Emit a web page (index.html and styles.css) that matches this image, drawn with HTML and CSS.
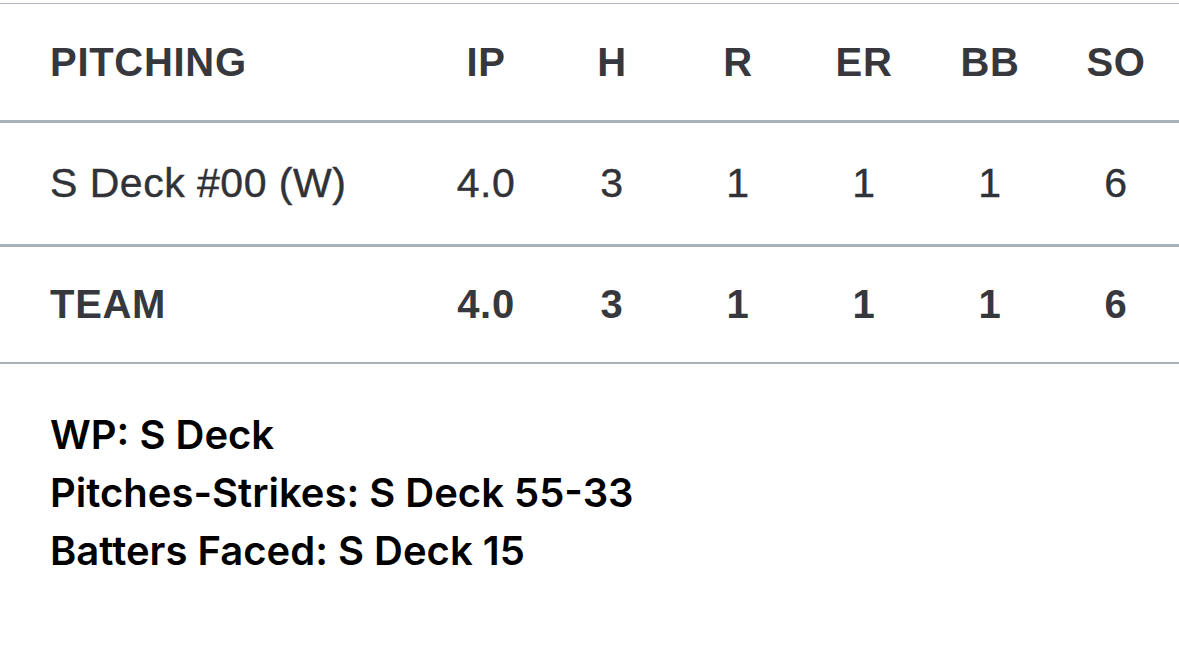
FILE: index.html
```html
<!DOCTYPE html>
<html lang="en">
<head>
    <meta charset="UTF-8">
    <meta name="viewport" content="width=device-width, initial-scale=1.0">
    <title>Pitching Box Score</title>
    <link rel="stylesheet" href="styles.css">
</head>
<body>
    <!-- Pitching Table -->
    <div class="statTable">
        <div class="statRow headRow">
            <div class="nameCell">PITCHING</div>
            <div>IP</div>
            <div>H</div>
            <div>R</div>
            <div>ER</div>
            <div>BB</div>
            <div>SO</div>
        </div>
        <div class="statRow playerRow">
            <div class="nameCell">S Deck #00 (W)</div>
            <div>4.0</div>
            <div>3</div>
            <div>1</div>
            <div>1</div>
            <div>1</div>
            <div>6</div>
        </div>
        <div class="statRow teamRow">
            <div class="nameCell">TEAM</div>
            <div>4.0</div>
            <div>3</div>
            <div>1</div>
            <div>1</div>
            <div>1</div>
            <div>6</div>
        </div>
    </div>

    <!-- Game Notes -->
    <div class="gameNotes">
        <p>WP: S Deck</p>
        <p>Pitches-Strikes: S Deck 55-33</p>
        <p>Batters Faced: S Deck 15</p>
    </div>
</body>
</html>
```

FILE: styles.css
```css
/* General Styling */
body {
    margin: 0;
    background: #fff;
    font-family: 'Liberation Sans', Arial, sans-serif;
    color: #36383d;
}

/* Table */
.statTable {
    margin-top: 3px;
    border-top: 1px solid #b3b9c0;
}

.statRow {
    display: grid;
    grid-template-columns: 423px repeat(6, 126px);
    align-items: center;
    text-align: center;
    font-size: 41px;
}

.statRow .nameCell {
    text-align: left;
    padding-left: 50px;
}

.headRow {
    height: 116px;
    border-bottom: 3px solid #a9b1b9;
    font-size: 40px;
    font-weight: bold;
    letter-spacing: 0.7px;
}

.playerRow {
    height: 121px;
    border-bottom: 3px solid #a9b1b9;
    letter-spacing: 0.5px;
    color: #303237;
    -webkit-text-stroke: 0.4px #303237;
}

.teamRow {
    height: 115px;
    border-bottom: 2px solid #a9b1b9;
    font-size: 40px;
    font-weight: bold;
    letter-spacing: 0.7px;
}

/* Notes under the table */
.gameNotes {
    padding: 42px 0 0 50px;
    font-family: 'Inter', sans-serif;
    font-weight: 600;
    font-size: 40px;
    line-height: 58px;
    color: #000;
}

.gameNotes p {
    margin: 0;
}
```
